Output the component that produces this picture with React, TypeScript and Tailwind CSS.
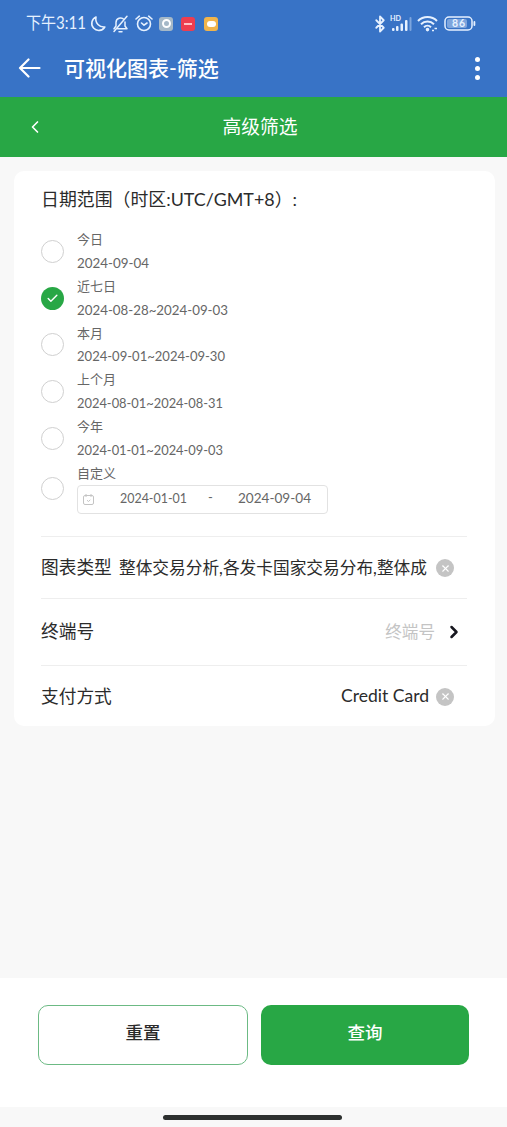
import { Bluetooth, Check, ChevronLeft, ChevronRight, X } from 'lucide-react'

const presets = [
  { label: '今日', range: '2024-09-04', width: 72 },
  { label: '近七日', range: '2024-08-28~2024-09-03', width: 151, checked: true },
  { label: '本月', range: '2024-09-01~2024-09-30', width: 148 },
  { label: '上个月', range: '2024-08-01~2024-08-31', width: 146 },
  { label: '今年', range: '2024-01-01~2024-09-03', width: 146 },
]

// Text whose advance is pinned to a known width
function Fit({ text, width, size = 13 }: { text: string; width: number; size?: number }) {
  return (
    <svg className="block overflow-visible" width={width} height={20} fill="currentColor">
      <text x="0" y="15" fontSize={size} textLength={width} lengthAdjust="spacingAndGlyphs">
        {text}
      </text>
    </svg>
  )
}

function Radio({ checked }: { checked?: boolean }) {
  if (checked) {
    return (
      <span className="flex size-[23px] shrink-0 items-center justify-center rounded-full bg-[#28a745] text-white">
        <Check size={13} strokeWidth={2.6} />
      </span>
    )
  }
  return <span className="size-[23px] shrink-0 rounded-full border border-[#d0d0d0] bg-white" />
}

function ClearButton() {
  return (
    <button className="flex size-[18px] shrink-0 items-center justify-center rounded-full bg-[#c4c4c4] text-white">
      <X size={11} strokeWidth={2.4} />
    </button>
  )
}

function StatusBar() {
  return (
    <div className="flex h-[47px] items-center pr-[31px] pl-[26px] text-[#e6f1ff]">
      <Fit text="下午3:11" width={60} size={17.5} />
      <svg className="ml-[4px]" width="16" height="17" viewBox="0 0 16 17" fill="none" stroke="currentColor" strokeWidth="1.6" strokeLinejoin="round">
        <path d="M6 2A7 7 0 1 0 14.8 12C9.5 12.5 4.8 8 6 2Z" />
      </svg>
      {/* Muted bell */}
      <svg className="ml-1.5" width="17" height="18" viewBox="0 0 17 18" fill="none" stroke="currentColor" strokeWidth="1.5" strokeLinecap="round" strokeLinejoin="round">
        <path d="M12 4.5A4.6 4.6 0 0 0 4 7.5V11L2 13.8M5.5 13.8H15L13 11V7M7 16.8H10M15 1.2L2 16.5" />
      </svg>
      <svg className="ml-1.5" width="18" height="17" viewBox="0 0 18 17" fill="none" stroke="currentColor" strokeWidth="1.6" strokeLinecap="round" strokeLinejoin="round">
        <circle cx="9" cy="9" r="6.5" />
        <path d="M1 4L4.3 1.2M17 4L13.7 1.2M6.5 8L9 10.2L12 8" />
      </svg>
      <span className="ml-[6px] flex size-[14px] items-center justify-center rounded-[3px] bg-[#a5b8c7]">
        <span className="size-[9px] rounded-full border-2 border-white bg-[#a5b8c7]" />
      </span>
      <span className="ml-2 flex size-[14px] items-center justify-center rounded-[3px] bg-[#ee3d4f]">
        <span className="h-0.5 w-2 bg-[#ffc1c4]" />
      </span>
      <span className="ml-[9px] flex size-[14px] items-center justify-center rounded-[3px] bg-[#f1b44b]">
        <span className="h-1.5 w-[9px] rounded-sm bg-white" />
      </span>
      <div className="ml-auto flex items-center">
        <Bluetooth size={18} strokeWidth={2.4} />
        <svg className="ml-[1px]" width="24" height="17" viewBox="0 0 24 17" fill="currentColor">
          <text x="0" y="5.5" fontSize="7" fontWeight="700" textLength="11" lengthAdjust="spacingAndGlyphs">HD</text>
          <rect x="2" y="13" width="2.5" height="3" rx="1" />
          <rect x="6" y="11" width="2.5" height="5" rx="1" />
          <rect x="10.5" y="8.5" width="2.5" height="7.5" rx="1" />
          <rect x="15" y="5" width="2.5" height="11" rx="1" />
          <rect x="19.5" y="2" width="2" height="14" rx="1" opacity="0.4" />
        </svg>
        <svg className="ml-[3px]" width="21" height="17" viewBox="0 0 21 17" fill="none" stroke="currentColor" strokeWidth="2">
          <path d="M1 6A13.5 13.5 0 0 1 20 6M4 9.2A9.3 9.3 0 0 1 17 9.2M7 12.2A5 5 0 0 1 14 12.2" />
          <circle cx="10.5" cy="14.6" r="0.8" fill="currentColor" />
          <path d="M15 15.5H17M17.5 13.5H20" strokeWidth="1.5" />
        </svg>
        <svg className="ml-[6px]" width="32" height="15" viewBox="0 0 32 15" fill="currentColor">
          <rect x="1" y="1" width="27" height="13" rx="4" fill="none" stroke="currentColor" strokeWidth="1.5" />
          <rect x="3" y="3" width="20" height="9" rx="2" opacity="0.4" />
          <rect x="29.5" y="5" width="1.8" height="5" rx="0.9" />
          <text x="8" y="11.4" fontSize="10.5" fontWeight="700" textLength="13">86</text>
        </svg>
      </div>
    </div>
  )
}

export default function App() {
  return (
    <div className="flex h-[1127px] w-[507px] flex-col overflow-hidden bg-[#f8f8f8] font-['Lato','Noto_Sans_CJK_SC',sans-serif] text-[#2b2b2b]">
      <header className="h-[97px] shrink-0 bg-[#3873c6] text-white">
        <StatusBar />
        <div className="flex h-[42px] items-center pr-[27px] pl-[18px]">
          <svg width="23" height="20" viewBox="0 0 23 20" fill="none" stroke="currentColor" strokeWidth="2.2" strokeLinecap="round" strokeLinejoin="round">
            <path d="M21.5 10H2M10.5 1.5L2 10L10.5 18.5" />
          </svg>
          <h1 className="ml-[23px] text-[21px] font-medium whitespace-nowrap">可视化图表-筛选</h1>
          <div className="ml-auto flex flex-col gap-1">
            <span className="size-[5px] rounded-full bg-white" />
            <span className="size-[5px] rounded-full bg-white" />
            <span className="size-[5px] rounded-full bg-white" />
          </div>
        </div>
      </header>

      <div className="grid h-[60px] shrink-0 grid-cols-[60px_1fr_47px] items-center bg-[#28a745] text-white">
        <ChevronLeft className="-mt-px ml-[25px]" size={20} strokeWidth={2} />
        <h2 className="text-center text-[18.8px]">高级筛选</h2>
      </div>

      <main className="mt-[14px] ml-[14px] h-[555px] w-[481px] shrink-0 rounded-[10px] bg-white pr-7 pl-[27px]">
        <div className="flex h-[57px] items-center pt-0.5">
          <Fit text="日期范围（时区:UTC/GMT+8）:" width={256} size={17.8} />
        </div>

        <div className="text-[13px] text-[#666]">
          {presets.map((preset) => (
            <div key={preset.label} className="flex h-[46.8px] items-center gap-[13px]">
              <Radio checked={preset.checked} />
              <div className="flex flex-col">
                <span className="h-[23.4px] leading-[22px]">{preset.label}</span>
                <div className="h-[23.4px] pt-[1.5px]">
                  <Fit text={preset.range} width={preset.width} />
                </div>
              </div>
            </div>
          ))}
          <div className="flex h-[53px] items-center gap-[13px]">
            <Radio />
            <div>
              <span className="block h-[23px] leading-[23px]">自定义</span>
              <div className="flex h-[29px] w-[251px] items-center rounded border border-[#e2e2e2] pl-[5px]">
                <svg width="11" height="11" viewBox="0 0 11 11" fill="none" stroke="#c4c4c4">
                  <rect x="0.5" y="1.5" width="10" height="9" rx="1.5" />
                  <path d="M3 0V3M8 0V3M4 6.2L5.5 7.5L7.3 5.8" />
                </svg>
                <div className="-mt-1 ml-[26px]"><Fit text="2024-01-01" width={67} /></div>
                <span className="-mt-1 ml-[21px]">-</span>
                <div className="-mt-1 ml-[25px]"><Fit text="2024-09-04" width={73} /></div>
              </div>
            </div>
          </div>
        </div>

        <div className="mt-[21px] flex h-[62px] items-center border-t border-[#eee] pt-0.5">
          <span className="w-[78px] shrink-0 text-[17.7px]">图表类型</span>
          <span className="w-[309px] shrink-0 text-[16.7px] whitespace-nowrap">
            整体交易分析,各发卡国家交易分布,整体成
          </span>
          <span className="ml-2"><ClearButton /></span>
        </div>
        <div className="flex h-[67px] items-center border-t border-[#eee]">
          <span className="text-[17.7px]">终端号</span>
          <span className="ml-auto text-[16.6px] text-[#c4c4c4]">终端号</span>
          <ChevronRight className="mr-[3px] ml-[9px] text-[#17171f]" size={20} strokeWidth={3} />
        </div>
        <div className="flex h-[61px] items-center border-t border-[#eee] pt-0.5">
          <span className="text-[17.7px]">支付方式</span>
          <div className="mr-[13px] ml-auto flex items-center gap-[7px]">
            <Fit text="Credit Card" width={88} size={17} />
            <ClearButton />
          </div>
        </div>
      </main>

      <footer className="mt-auto flex h-[129px] shrink-0 gap-[13px] bg-white pt-[27px] pr-[38px] pl-[38px] text-[17.5px]">
        <button className="h-[60px] flex-1 rounded-[10px] border-[1.5px] border-[#6cba84] pb-1 font-medium">重置</button>
        <button className="h-[60px] flex-1 rounded-[10px] bg-[#28a745] pb-1 font-medium text-white">查询</button>
      </footer>
      <div className="flex h-5 shrink-0 items-center justify-center pr-[3px]">
        <span className="h-[5px] w-[179px] rounded-full bg-[#2d302f]" />
      </div>
    </div>
  )
}
